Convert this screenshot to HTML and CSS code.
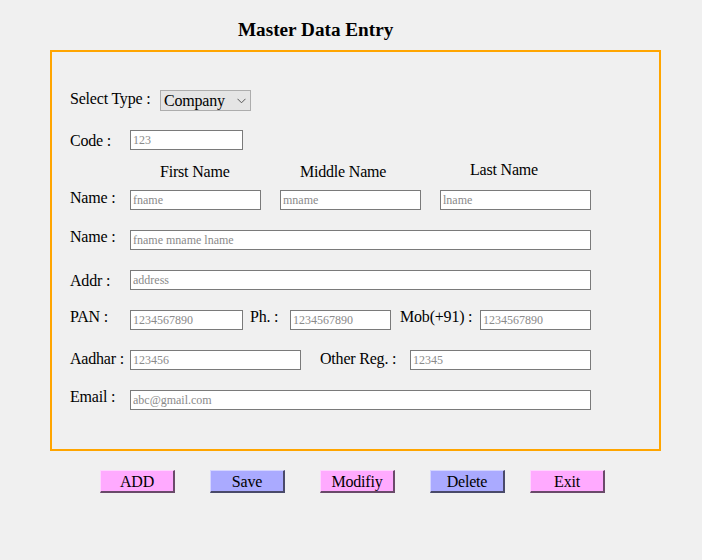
FILE: index.html
```html
<!DOCTYPE html>
<html>
<head>
<meta charset="utf-8">
<title>Master Data Entry</title>
<link rel="stylesheet" href="styles.css">
</head>
<body>
<div class="page">
  <h3 class="title">Master Data Entry</h3>
  <div class="box">
    <div class="row">
      <span class="lbl w90 up1">Select Type :</span>
      <div class="sel-wrap">
        <select class="sel"><option>Company</option><option>Individual</option></select>
        <svg class="chev" width="9" height="6" viewBox="0 0 9 6"><path d="M0.5 0.8 L4.5 4.8 L8.5 0.8" fill="none" stroke="#555" stroke-width="1"/></svg>
      </div>
    </div>
    <div class="row">
      <span class="lbl dn1">Code :</span>
      <input class="inp w113" placeholder="123">
    </div>
    <div class="row heads">
      <span class="head h1">First Name</span>
      <span class="head h2">Middle Name</span>
      <span class="head h3 up1">Last Name</span>
    </div>
    <div class="row tight">
      <span class="lbl up2">Name :</span>
      <input class="inp w131" placeholder="fname">
      <input class="inp w141 ml19" placeholder="mname">
      <input class="inp w151 ml19" placeholder="lname">
    </div>
    <div class="row">
      <span class="lbl up3">Name :</span>
      <input class="inp w461" placeholder="fname mname lname">
    </div>
    <div class="row">
      <span class="lbl dn1">Addr :</span>
      <input class="inp w461" placeholder="address">
    </div>
    <div class="row">
      <span class="lbl up3">PAN :</span>
      <input class="inp w113" placeholder="1234567890">
      <span class="lbl ml7 w40 up3">Ph. :</span>
      <input class="inp w101" placeholder="1234567890">
      <span class="lbl ml9 w80 up3">Mob(+91) :</span>
      <input class="inp w111" placeholder="1234567890">
    </div>
    <div class="row">
      <span class="lbl up1">Aadhar :</span>
      <input class="inp w171" placeholder="123456">
      <span class="lbl ml19 w90 up1">Other Reg. :</span>
      <input class="inp w181" placeholder="12345">
    </div>
    <div class="row">
      <span class="lbl up3">Email :</span>
      <input class="inp w461" placeholder="abc@gmail.com">
    </div>
  </div>
  <div class="actions">
    <button class="btn pink">ADD</button>
    <button class="btn blue">Save</button>
    <button class="btn pink">Modifiy</button>
    <button class="btn blue">Delete</button>
    <button class="btn pink last">Exit</button>
  </div>
</div>
</body>
</html>
```
FILE: styles.css
```css
html, body {
  margin: 0;
  padding: 0;
  background: #f0f0f0;
}
body {
  font-family: "Liberation Serif", "Times New Roman", serif;
  font-size: 16px;
  color: #000;
}
.page {
  padding-top: 19px;
}
.title {
  margin: 0 0 9px 238px;
  font-size: 19.2px;
  font-weight: bold;
  line-height: 22px;
}
.box {
  box-sizing: border-box;
  margin-left: 50px;
  width: 611px;
  height: 401px;
  border: 2px solid #ffa500;
  padding: 38px 0 0 18px;
  display: flex;
  flex-direction: column;
}
.row {
  display: flex;
  align-items: center;
  height: 20px;
  margin-bottom: 20px;
}
.row.heads {
  margin-top: -8px;
  margin-bottom: 8px;
}
.lbl {
  width: 60px;
  flex: none;
  line-height: 20px;
  white-space: nowrap;
  letter-spacing: -0.2px;
}
.lbl.up1 { line-height: 17px; align-self: flex-start; }
.lbl.up2 { line-height: 16px; align-self: flex-start; }
.lbl.up3 { line-height: 14px; align-self: flex-start; }
.lbl.dn1 { line-height: 22px; align-self: flex-start; }

.sel-wrap {
  position: relative;
  width: 91px;
  height: 21px;
  align-self: flex-start;
}
.sel {
  -webkit-appearance: none;
  appearance: none;
  box-sizing: border-box;
  width: 91px;
  height: 21px;
  margin: 0;
  padding: 0 0 0 3px;
  border: 1px solid #adadad;
  background: #e5e5e5;
  border-radius: 0;
  font-family: "Liberation Serif", "Times New Roman", serif;
  font-size: 16px;
  color: #000;
  line-height: 19px;
  letter-spacing: -0.2px;
}
.chev {
  position: absolute;
  right: 5px;
  top: 8px;
  pointer-events: none;
}

.inp {
  box-sizing: border-box;
  height: 20px;
  margin: 0;
  padding: 1px 2px 0 2px;
  border: 1px solid #7a7a7a;
  background: #fff;
  font-family: "Liberation Serif", "Times New Roman", serif;
  font-size: 12px;
  color: #000;
  flex: none;
}
.inp::placeholder { color: #8a8a8a; }
.w101 { width: 101px; }
.w111 { width: 111px; }
.w113 { width: 113px; }
.w131 { width: 131px; }
.w141 { width: 141px; }
.w151 { width: 151px; }
.w171 { width: 171px; }
.w181 { width: 181px; }
.w461 { width: 461px; }

.lbl.w90 { width: 90px; }
.lbl.w40 { width: 40px; }
.lbl.w80 { width: 80px; }
.row .ml7 { margin-left: 7px; }
.row .ml9 { margin-left: 9px; }
.row .ml19 { margin-left: 19px; }

.head {
  line-height: 20px;
  white-space: nowrap;
  flex: none;
  letter-spacing: -0.2px;
}
.head.up1 { line-height: 16px; align-self: flex-start; }
.h1 { margin-left: 90px; width: 140px; }
.h2 { width: 170px; }

.actions {
  display: flex;
  margin-top: 19px;
  padding-left: 100px;
  gap: 35px;
}
.btn {
  box-sizing: border-box;
  width: 75px;
  height: 23px;
  margin: 0;
  padding: 2px 0 0 0;
  font-family: "Liberation Serif", "Times New Roman", serif;
  font-size: 16px;
  color: #000;
  border-width: 1px 2px 2px 1px;
  border-style: solid;
  letter-spacing: -0.2px;
}
.btn.last { margin-left: -10px; }
.pink {
  background: #ffaaff;
  border-color: #ffd5ff #6a4a6a #6a4a6a #ffd5ff;
}
.blue {
  background: #aaaaff;
  border-color: #d5d5ff #4a4a6a #4a4a6a #d5d5ff;
}
```
